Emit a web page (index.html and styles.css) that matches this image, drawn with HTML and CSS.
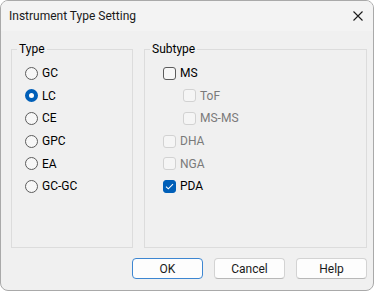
FILE: index.html
```html
<!DOCTYPE html>
<html>
<head>
<meta charset="utf-8">
<link rel="stylesheet" href="styles.css">
</head>
<body>
<div class="window">
  <div class="titlebar">
    <span class="title">Instrument Type Setting</span>
    <span class="close" aria-label="Close">
      <svg width="10" height="10" viewBox="0 0 10 10"><path d="M0.5 0.5 L9.5 9.5 M9.5 0.5 L0.5 9.5" stroke="#1a1a1a" stroke-width="1.1" fill="none"/></svg>
    </span>
  </div>
  <div class="content">
    <div class="groups">
      <fieldset class="group group-type">
        <legend>Type</legend>
        <div class="list">
          <label class="item"><span class="radio"></span>GC</label>
          <label class="item"><span class="radio on"></span>LC</label>
          <label class="item"><span class="radio"></span>CE</label>
          <label class="item"><span class="radio"></span>GPC</label>
          <label class="item"><span class="radio"></span>EA</label>
          <label class="item"><span class="radio"></span>GC-GC</label>
        </div>
      </fieldset>
      <fieldset class="group group-sub">
        <legend>Subtype</legend>
        <div class="list">
          <label class="item"><span class="check"></span>MS</label>
          <label class="item sub disabled"><span class="check"></span>ToF</label>
          <label class="item sub disabled"><span class="check"></span>MS-MS</label>
          <label class="item disabled"><span class="check"></span>DHA</label>
          <label class="item disabled"><span class="check"></span>NGA</label>
          <label class="item"><span class="check on"><svg width="9" height="7" viewBox="0 0 9 7"><path d="M1 3.6 L3.3 5.8 L8 1.2" stroke="#fff" stroke-width="1.1" fill="none"/></svg></span>PDA</label>
        </div>
      </fieldset>
    </div>
    <div class="buttons">
      <button class="btn default">OK</button>
      <button class="btn">Cancel</button>
      <button class="btn">Help</button>
    </div>
  </div>
</div>
</body>
</html>
```

FILE: styles.css
```css
html, body {
  margin: 0;
  padding: 0;
  background: #ffffff;
}
body {
  font-family: Roboto, "Noto Sans", sans-serif;
  font-size: 12px;
  color: #000;
}
.window {
  width: 374px;
  height: 291px;
  box-sizing: border-box;
  border: 1px solid #a9a9a9;
  border-radius: 8px;
  background: #f0f0f0;
  overflow: hidden;
  display: flex;
  flex-direction: column;
}
.titlebar {
  height: 30px;
  flex: none;
  background: #f3f3f3;
  display: flex;
  align-items: center;
  justify-content: space-between;
  padding: 0 10px 0 8px;
}
.title {
  font-size: 12px;
  line-height: 16px;
  color: #1a1a1a;
}
.close {
  display: flex;
  width: 10px;
  height: 10px;
}
.content {
  flex: 1;
  display: flex;
  flex-direction: column;
  padding: 10px 6px 0 10px;
}
.groups {
  display: flex;
  gap: 11px;
}
.group {
  margin: 0;
  padding: 0;
  border: 1px solid #dcdcdc;
  box-sizing: border-box;
  height: 207px;
  min-width: 0;
}
.group-type { width: 122px; }
.group-sub { width: 223px; }
legend {
  margin-left: 5px;
  padding: 0 2px;
  line-height: 16px;
  font-size: 12px;
}
.list {
  display: flex;
  flex-direction: column;
  padding-top: 5px;
}
.group-type .list { padding-left: 13px; }
.group-sub .list { padding-left: 18px; }
.item {
  height: 22.6px;
  display: flex;
  align-items: center;
  gap: 4px;
  line-height: 16px;
}
.item.sub { padding-left: 20px; }
.item.disabled { color: #7a7a7a; }
.radio {
  width: 13px;
  height: 13px;
  box-sizing: border-box;
  border: 1px solid #5c5c5c;
  border-radius: 50%;
  background: #f7f7f7;
  flex: none;
}
.radio.on {
  border: 4px solid #005fb8;
  background: #ffffff;
}
.check {
  width: 13px;
  height: 13px;
  box-sizing: border-box;
  border: 1px solid #5c5c5c;
  border-radius: 3px;
  background: #f7f7f7;
  flex: none;
  display: flex;
  align-items: center;
  justify-content: center;
}
.item.disabled .check {
  border-color: #d2d2d2;
  background: #f5f5f5;
}
.check.on {
  border-color: #005fb8;
  background: #005fb8;
}
.buttons {
  display: flex;
  justify-content: flex-end;
  gap: 11px;
  margin-top: 10px;
}
.btn {
  width: 71px;
  height: 21px;
  box-sizing: border-box;
  border: 1px solid #d3d3d3;
  border-bottom-color: #b8b8b8;
  border-radius: 4px;
  background: #fdfdfd;
  font-family: Roboto, "Noto Sans", sans-serif;
  font-size: 12px;
  color: #1a1a1a;
  padding: 0;
}
.btn.default {
  border: 1px solid #3d86d1;
}
```
